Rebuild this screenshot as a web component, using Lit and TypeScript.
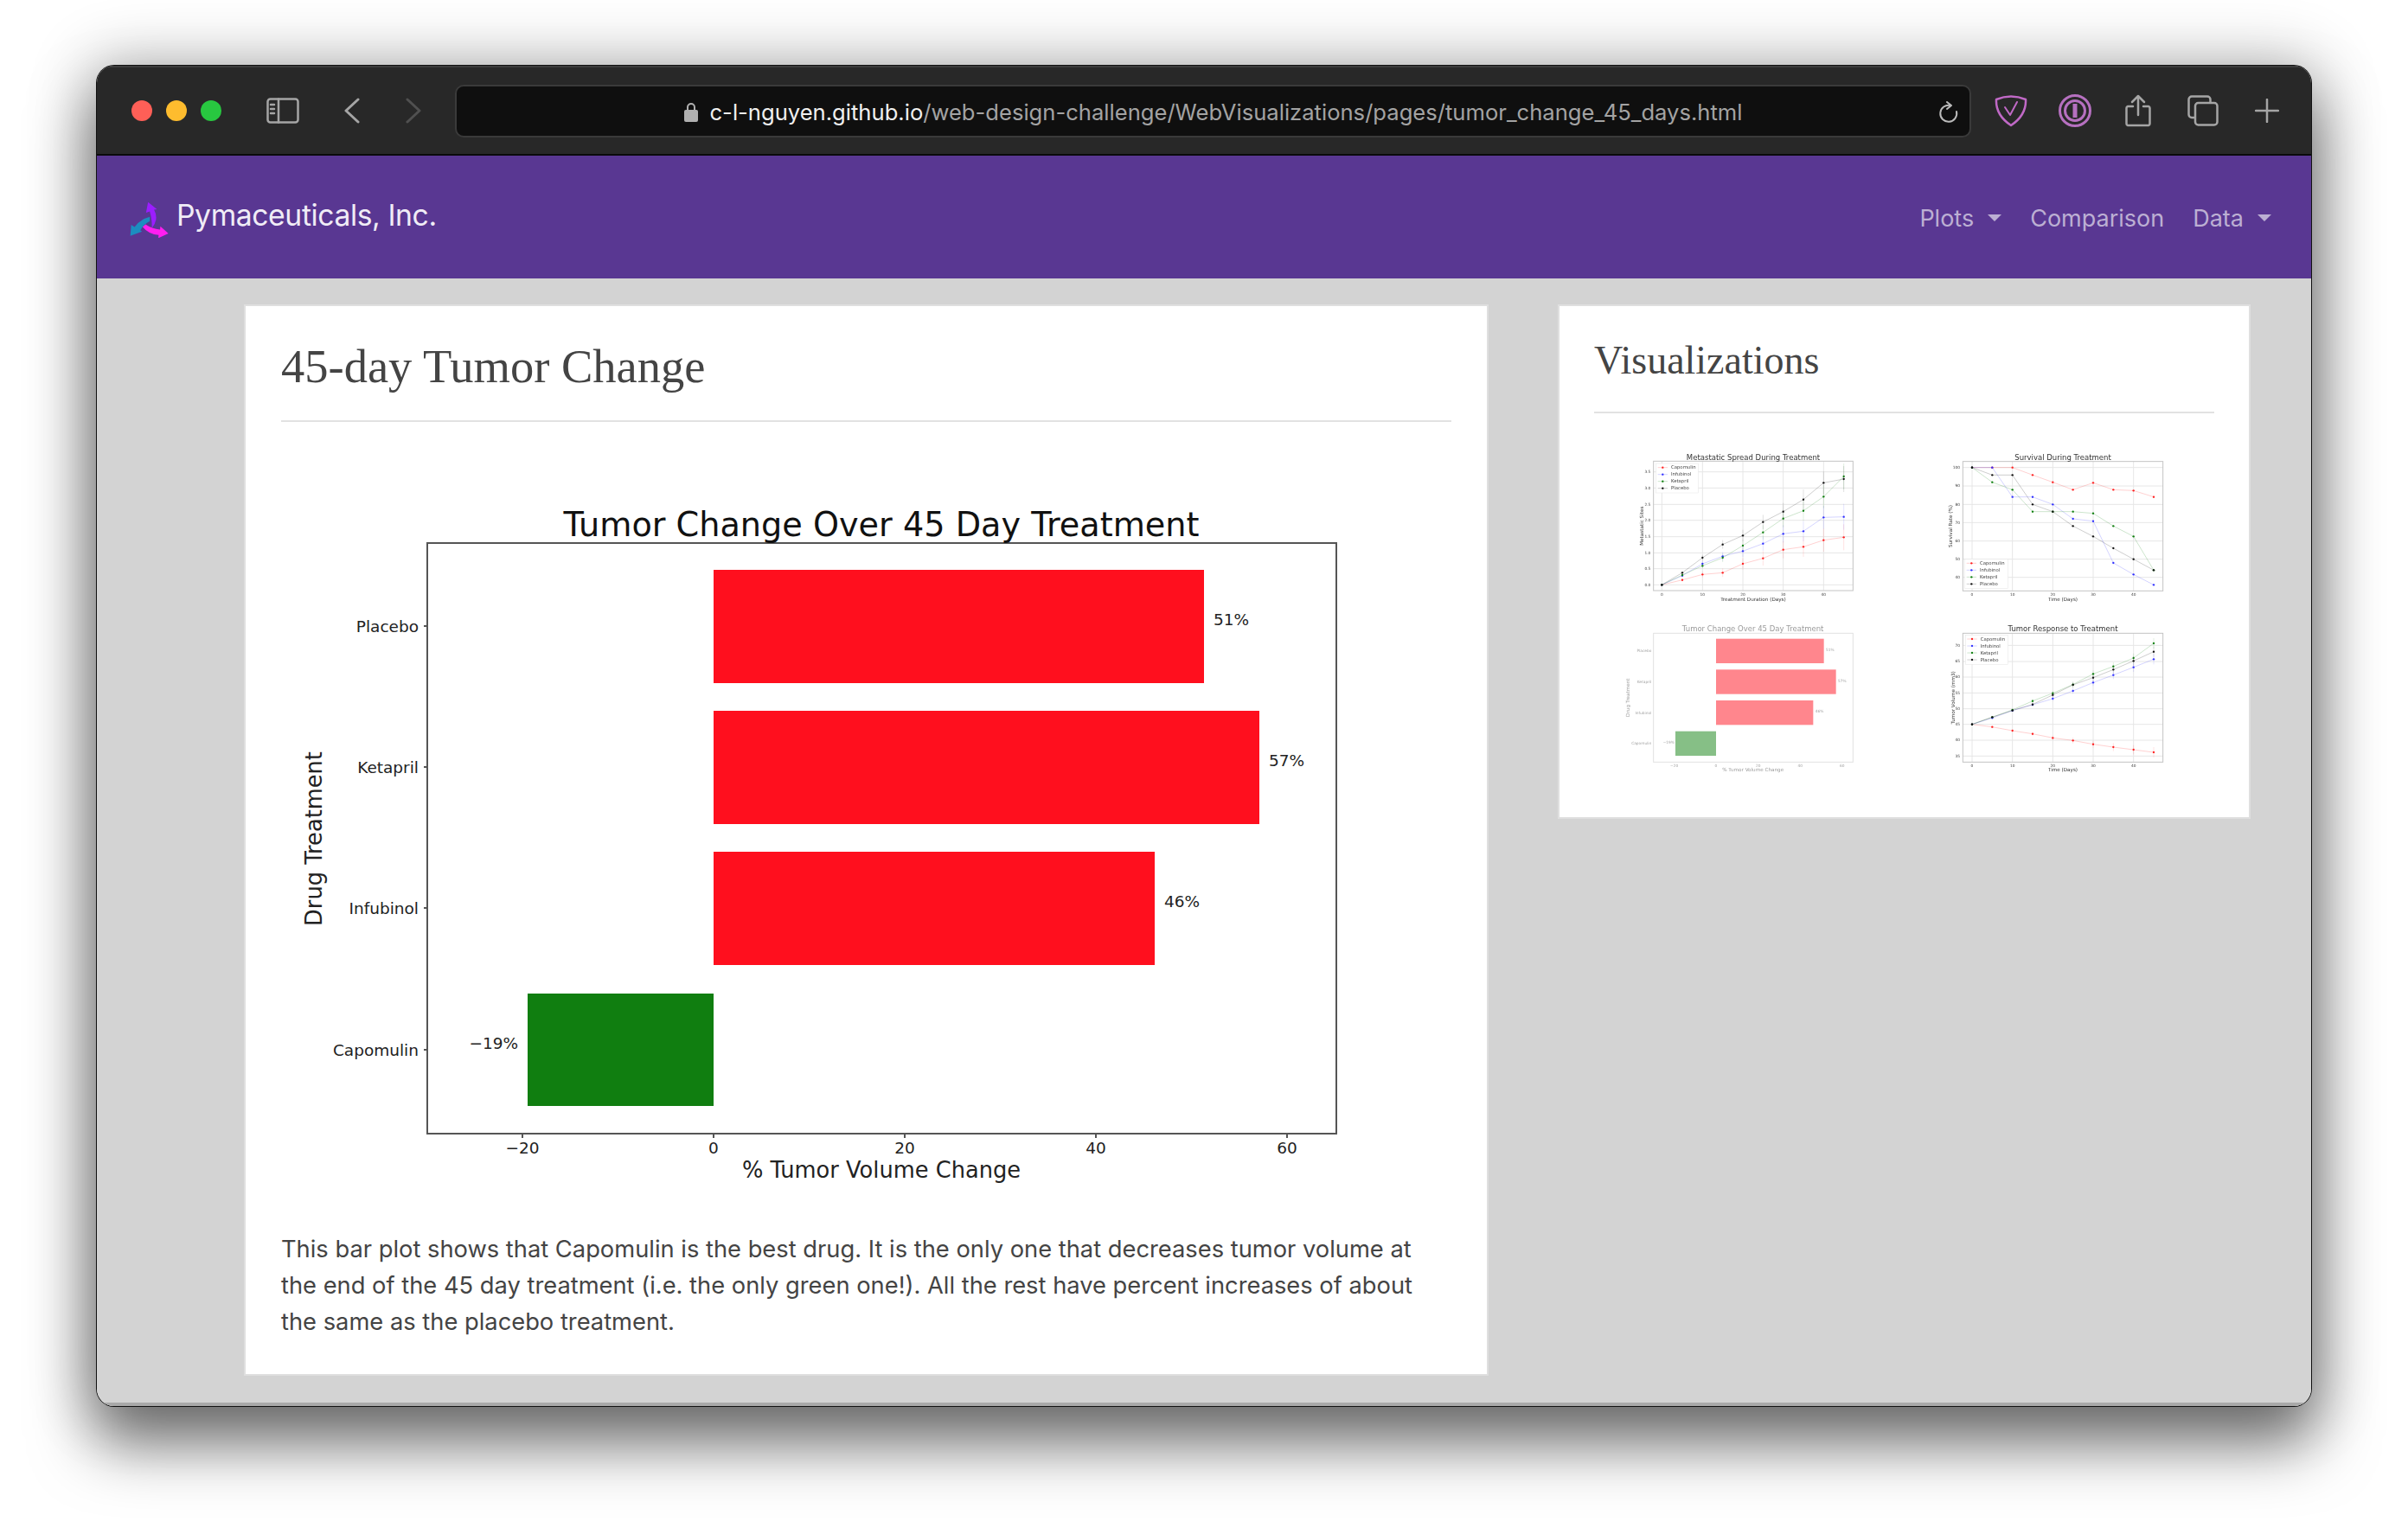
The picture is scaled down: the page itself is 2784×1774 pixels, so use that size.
import {LitElement, css, html, svg} from 'lit';
import {customElement} from 'lit/decorators.js';

const SERIES_COLORS = ['#ff2020', '#3030ff', '#108010', '#111111'];
const SERIES_NAMES = ['Capomulin', 'Infubinol', 'Ketapril', 'Placebo'];

interface LineChart {
    title: string;
    xLabel: string;
    yLabel: string;
    yLabelX: number;
    box: number[];
    xs: number[];
    series: number[][];
    errors: number;
    gridX: number[];
    yTicks: [number, string][];
    legend: number[];
    titleY: number;
    xLabelY: number;
}

const charts: LineChart[] = [
    {
        title: 'Metastatic Spread During Treatment',
        xLabel: 'Treatment Duration (Days)',
        yLabel: 'Metastatic Sites',
        yLabelX: 240,
        box: [275, 100, 967, 549],
        xs: [304, 375, 445, 515, 585, 655, 725, 795, 865, 935],
        series: [
            [529, 512, 493, 487, 456, 437, 407, 397, 374, 364],
            [529, 497, 456, 430, 412, 386, 352, 343, 295, 293],
            [529, 495, 463, 435, 393, 347, 299, 272, 223, 153],
            [529, 487, 435, 389, 358, 311, 275, 233, 175, 162],
        ],
        errors: 5,
        gridX: [304, 445, 585, 725, 865],
        yTicks: [[529, '0.0'], [473, '0.5'], [418, '1.0'], [362, '1.5'], [305, '2.0'], [250, '2.5'], [193, '3.0'], [137, '3.5']],
        legend: [284, 108, 430, 210],
        titleY: 95,
        xLabelY: 584,
    },
    {
        title: 'Survival During Treatment',
        xLabel: 'Time (Days)',
        yLabel: 'Survival Rate (%)',
        yLabelX: 172,
        box: [208, 101, 902, 550],
        xs: [240, 310, 380, 450, 520, 590, 660, 730, 800, 870],
        series: [
            [122, 122, 122, 148, 173, 199, 175, 199, 202, 224],
            [122, 122, 224, 224, 250, 300, 308, 453, 493, 529],
            [122, 173, 199, 275, 275, 275, 281, 325, 361, 478],
            [122, 148, 148, 250, 275, 325, 361, 402, 440, 478],
        ],
        errors: 0,
        gridX: [240, 380, 520, 660, 800],
        yTicks: [[122, '100'], [186, '90'], [250, '80'], [313, '70'], [377, '60'], [440, '50'], [503, '40']],
        legend: [215, 440, 365, 542],
        titleY: 95,
        xLabelY: 584,
    },
    {
        title: 'Tumor Response to Treatment',
        xLabel: 'Time (Days)',
        yLabel: 'Tumor Volume (mm3)',
        yLabelX: 180,
        box: [208, 97, 902, 544],
        xs: [240, 310, 380, 450, 520, 590, 660, 730, 800, 870],
        series: [
            [413, 422, 435, 446, 460, 469, 482, 492, 501, 510],
            [413, 391, 365, 345, 324, 297, 268, 242, 215, 187],
            [413, 388, 363, 332, 305, 275, 238, 212, 183, 132],
            [413, 388, 365, 344, 311, 276, 251, 223, 193, 161],
        ],
        errors: 2,
        gridX: [240, 380, 520, 660, 800],
        yTicks: [[139, '70'], [195, '65'], [249, '60'], [304, '55'], [359, '50'], [413, '45'], [468, '40'], [523, '35']],
        legend: [217, 103, 365, 205],
        titleY: 90,
        xLabelY: 577,
    },
];

function lineThumb(c: LineChart) {
    const [x0, y0, x1, y1] = c.box;
    const [lx0, ly0, lx1, ly1] = c.legend;
    const midX = (x0 + x1) / 2;
    const midY = (y0 + y1) / 2;
    return html`<svg class="thumb" viewBox="120 30 960 600">
        ${c.gridX.map((x) => svg`<line class="grid" x1=${x} x2=${x} y1=${y0} y2=${y1}></line>
            <text class="tick" x=${x} y=${y1 + 18} text-anchor="middle">${x === c.gridX[0] ? 0 : 10 * c.gridX.indexOf(x)}</text>`)}
        ${c.yTicks.map(([y, label]) => svg`<line class="grid" x1=${x0} x2=${x1} y1=${y} y2=${y}></line>
            <text class="tick" x=${x0 - 10} y=${y + 4} text-anchor="end">${label}</text>`)}
        ${c.series.map((ys, s) => svg`
            ${c.errors ? ys.map((y, i) => svg`<line x1=${c.xs[i]} x2=${c.xs[i]} y1=${y - i * c.errors} y2=${y + i * c.errors} stroke=${SERIES_COLORS[s]} stroke-opacity="0.2" stroke-width="2"></line>`) : ''}
            <polyline points=${ys.map((y, i) => `${c.xs[i]},${y}`).join(' ')} fill="none" stroke=${SERIES_COLORS[s]} stroke-opacity="0.25" stroke-width="2.5"></polyline>
            ${ys.map((y, i) => svg`<circle cx=${c.xs[i]} cy=${y} r="3.5" fill=${SERIES_COLORS[s]}></circle>`)}
        `)}
        <rect class="frame" x=${x0} y=${y0} width=${x1 - x0} height=${y1 - y0}></rect>
        <rect x=${lx0} y=${ly0} width=${lx1 - lx0} height=${ly1 - ly0} fill="#fff" stroke="#e4e4e4" stroke-width="1.5"></rect>
        ${SERIES_NAMES.map((name, s) => {
            const y = ly0 + 14 + s * 24;
            return svg`<line x1=${lx0 + 6} x2=${lx0 + 40} y1=${y} y2=${y} stroke=${SERIES_COLORS[s]} stroke-opacity="0.25" stroke-width="2.5"></line>
                <circle cx=${lx0 + 23} cy=${y} r="3.5" fill=${SERIES_COLORS[s]}></circle>
                <text class="legend" x=${lx0 + 52} y=${y + 5}>${name}</text>`;
        })}
        <text class="title" x=${midX} y=${c.titleY} text-anchor="middle">${c.title}</text>
        <text class="axis" x=${midX} y=${c.xLabelY} text-anchor="middle">${c.xLabel}</text>
        <text class="axis" transform="translate(${c.yLabelX} ${midY}) rotate(-90)" text-anchor="middle">${c.yLabel}</text>
    </svg>`;
}

function barThumb() {
    const bars = [
        [492, 116, 374, 85, '#ff0f1e'],
        [492, 223, 416, 85, '#ff0f1e'],
        [492, 330, 337, 85, '#ff0f1e'],
        [351, 437, 141, 85, '#108010'],
    ] as [number, number, number, number, string][];
    const names: [string, number][] = [['Placebo', 159], ['Ketapril', 266], ['Infubinol', 373], ['Capomulin', 480]];
    const ticks: [string, number][] = [['−20', 347], ['0', 492], ['20', 638], ['40', 784], ['60', 929]];
    const values: [string, number, number][] = [['51%', 873, 159], ['57%', 915, 266], ['46%', 836, 373], ['−19%', 308, 480]];
    return html`<svg class="thumb faded" viewBox="120 30 960 600">
        ${bars.map(([x, y, w, h, fill]) => svg`<rect x=${x} y=${y} width=${w} height=${h} fill=${fill}></rect>`)}
        <rect class="frame" x="275" y="97" width="692" height="447"></rect>
        ${names.map(([n, y]) => svg`<text class="tick" x="268" y=${y + 4} text-anchor="end">${n}</text>`)}
        ${ticks.map(([t, x]) => svg`<text class="tick" x=${x} y="560" text-anchor="middle">${t}</text>`)}
        ${values.map(([t, x, y]) => svg`<text class="tick" x=${x} y=${y}>${t}</text>`)}
        <text class="title" x="620" y="90" text-anchor="middle">Tumor Change Over 45 Day Treatment</text>
        <text class="axis" x="620" y="577" text-anchor="middle">% Tumor Volume Change</text>
        <text class="axis" transform="translate(193 320) rotate(-90)" text-anchor="middle">Drug Treatment</text>
    </svg>`;
}

function mainChart() {
    const bars: [string, number, number, string, string, number][] = [
        ['Placebo', 659, 1392, '#ff0f1e', '51%', 1403],
        ['Ketapril', 822, 1456, '#ff0f1e', '57%', 1467],
        ['Infubinol', 985, 1335, '#ff0f1e', '46%', 1346],
    ];
    const ticks: [string, number][] = [['−20', 604], ['0', 825], ['20', 1046], ['40', 1267], ['60', 1488]];
    return html`<svg class="plot" viewBox="325 560 1354 840">
        <rect class="plot-frame" x="494" y="628" width="1051" height="683"></rect>
        ${bars.map(([name, y, right, fill, label, lx]) => svg`
            <rect x="825" y=${y} width=${right - 825} height="131" fill=${fill}></rect>
            <line class="plot-frame" x1="490" x2="494" y1=${y + 65} y2=${y + 65}></line>
            <text class="plot-tick" x="484" y=${y + 72} text-anchor="end">${name}</text>
            <text class="plot-tick" x=${lx} y=${y + 64}>${label}</text>`)}
        <rect x="610" y="1149" width="215" height="130" fill="#107e10"></rect>
        <line class="plot-frame" x1="490" x2="494" y1="1214" y2="1214"></line>
        <text class="plot-tick" x="484" y="1221" text-anchor="end">Capomulin</text>
        <text class="plot-tick" x="599" y="1213" text-anchor="end">−19%</text>
        ${ticks.map(([t, x]) => svg`<line class="plot-frame" x1=${x} x2=${x} y1="1311" y2="1316"></line>
            <text class="plot-tick" x=${x} y="1334" text-anchor="middle">${t}</text>`)}
        <text class="plot-title" x="1019" y="620" text-anchor="middle">Tumor Change Over 45 Day Treatment</text>
        <text class="plot-axis" x="1019" y="1362" text-anchor="middle">% Tumor Volume Change</text>
        <text class="plot-axis" transform="translate(372 970) rotate(-90)" text-anchor="middle">Drug Treatment</text>
    </svg>`;
}

@customElement('app-root')
export class AppRoot extends LitElement {
    static styles = css`
        :host {
            display: block;
            height: 1774px;
            padding: 76px 112px 0 112px;
            box-sizing: border-box;
            background: #fff;
            overflow: hidden;
            font-family: Inter, "Liberation Sans", sans-serif;
        }

        .window {
            height: 1550px;
            display: flex;
            flex-direction: column;
            border-radius: 20px;
            overflow: hidden;
        }

        .shadow {
            border-radius: 20px;
            box-shadow: 0 0 0 1px #111, 0 42px 70px 4px rgba(0, 0, 0, 0.5), 0 0 70px 10px rgba(0, 0, 0, 0.24);
        }

        .toolbar {
            height: 104px;
            flex: none;
            box-sizing: border-box;
            display: flex;
            align-items: center;
            background: #282828;
            border-top: 2px solid #3c3c3c;
            border-bottom: 2px solid #0a0a0a;
            padding: 0 0 0 40px;
        }

        .light {
            flex: none;
            width: 24px;
            height: 24px;
            border-radius: 50%;
            margin-right: 16px;
        }

        .toolbar svg {
            flex: none;
            fill: none;
            stroke: #a5a5a5;
            stroke-width: 2.5;
            stroke-linecap: round;
            stroke-linejoin: round;
        }

        .sidebar-icon {
            margin-left: 36px;
        }

        .back {
            margin-left: 52px;
        }

        .forward {
            margin-left: 53px;
            stroke: #505050 !important;
        }

        .address {
            margin-left: 39px;
            width: 1753px;
            height: 61px;
            box-sizing: border-box;
            flex: none;
            display: flex;
            align-items: center;
            position: relative;
            justify-content: center;
            background: #0f0f0f;
            border: 2px solid #3a3a3a;
            border-radius: 10px;
            font-size: 25.6px;
            color: #a3a3a3;
            padding-top: 2px;
        }

        .lock {
            margin-right: 12px;
            stroke: none !important;
            fill: #b0b0b0 !important;
        }

        .host-name {
            color: #f0f0f0;
        }

        .reload {
            position: absolute;
            right: 12px;
            top: 17px;
        }

        .shield {
            margin-left: 27px;
            stroke: #c069c6 !important;
        }

        .onepass {
            margin-left: 36px;
            stroke: #b670c0 !important;
        }

        .share {
            margin-left: 39px;
        }

        .tabs {
            margin-left: 42px;
        }

        .plus {
            margin-left: 42px;
        }

        .navbar {
            height: 142px;
            flex: none;
            box-sizing: border-box;
            display: flex;
            align-items: center;
            justify-content: space-between;
            background: #593792;
            padding: 0 46px 0 37px;
        }

        .brand {
            display: flex;
            align-items: center;
            color: #f0ecf6;
            font-size: 33.700px;
            letter-spacing: -0.4px;
            gap: 7px;
            padding-bottom: 6px;
        }

        .brand svg {
            margin-top: 10px;
        }

        .nav-links {
            display: flex;
            align-items: center;
            font-size: 27px;
            color: #bcafd3;
            padding-top: 2px;
        }

        .nav-link {
            display: flex;
            align-items: center;
            margin-left: 33px;
        }

        .caret {
            width: 0;
            height: 0;
            margin-left: 16px;
            border-left: 8px solid transparent;
            border-right: 8px solid transparent;
            border-top: 8px solid #bcafd3;
        }

        .content {
            flex: 1;
            display: flex;
            align-items: flex-start;
            gap: 80px;
            background: #d3d3d3;
            padding: 30px 0 0 170px;
            border-bottom: 4px solid #a9a9a9;
        }

        .card {
            box-sizing: border-box;
            background: #fff;
            border: 2px solid #dfdfdf;
            color: #444;
        }

        .card-main {
            width: 1439px;
            height: 1239px;
            padding: 0 41px;
        }

        .card-side {
            width: 801px;
            height: 595px;
            padding: 0 40px;
        }

        h2 {
            margin: 0;
            font-family: Georgia, "Liberation Serif", serif;
            font-weight: 400;
        }

        .card-main h2 {
            font-size: 54.500px;
            line-height: 80px;
            padding-top: 30px;
            padding-bottom: 22px;
        }

        .card-side h2 {
            font-size: 46px;
            line-height: 70px;
            padding-top: 28px;
            padding-bottom: 24px;
        }

        .rule {
            height: 2px;
            background: #e2e2e2;
        }

        .plot {
            display: block;
            width: 1354px;
            height: 840px;
            margin-top: 72px;
            margin-bottom: 24px;
        }

        .plot-frame {
            fill: none;
            stroke: #555;
            stroke-width: 2;
        }

        .plot-title {
            font: 38.200px "DejaVu Sans", sans-serif;
            fill: #111;
        }

        .plot-axis {
            font: 25.700px "DejaVu Sans", sans-serif;
            fill: #222;
        }

        .plot-tick {
            font: 18.500px "DejaVu Sans", sans-serif;
            fill: #222;
        }

        p {
            margin: 0;
            max-width: 1340px;
            font-size: 27.300px;
            line-height: 42px;
        }

        .thumbs {
            display: grid;
            grid-template-columns: 320px 320px;
            grid-auto-rows: 200px;
            column-gap: 60px;
            padding: 32px 0 0 17px;
        }

        .thumb {
            display: block;
            width: 320px;
            height: 200px;
            filter: blur(0.6px);
        }

        .faded {
            opacity: 0.5;
        }

        .grid {
            stroke: #e6e6e6;
            stroke-width: 3;
        }

        .frame {
            fill: none;
            stroke: #c4c4c4;
            stroke-width: 3;
        }

        .tick {
            font: 13px "DejaVu Sans", sans-serif;
            fill: #444;
        }

        .legend {
            font: 16px "DejaVu Sans", sans-serif;
            fill: #444;
        }

        .axis {
            font: 17px "DejaVu Sans", sans-serif;
            fill: #333;
        }

        .title {
            font: 25.500px "DejaVu Sans", sans-serif;
            fill: #333;
        }
    `;

    render() {
        return html`
            <div class="shadow">
                <div class="window">
                    ${this.renderToolbar()}
                    <nav class="navbar">
                        <div class="brand">
                            <svg width="48" height="43" viewBox="60 60 145 130">
                                <path fill="#9b1eff" d="M127 65L158 90L148 92Q166 125 140 157Q142 128 133 98L120 102Z"/>
                                <path fill="#1c8dc0" d="M65 183L68 145L80 152Q100 125 133 117L133 132Q112 142 100 164L106 168Z"/>
                                <path fill="#ff1ef0" d="M198 175L163 191L164 180Q130 178 108 152L118 143Q140 158 169 161L170 150Z"/>
                            </svg>
                            Pymaceuticals, Inc.
                        </div>
                        <div class="nav-links">
                            <span class="nav-link">Plots<span class="caret"></span></span>
                            <span class="nav-link">Comparison</span>
                            <span class="nav-link">Data<span class="caret"></span></span>
                        </div>
                    </nav>
                    <main class="content">
                        <section class="card card-main">
                            <h2>45-day Tumor Change</h2>
                            <div class="rule"></div>
                            ${mainChart()}
                            <p>This bar plot shows that Capomulin is the best drug. It is the only one that decreases tumor volume at the end of the 45 day treatment (i.e. the only green one!). All the rest have percent increases of about the same as the placebo treatment.</p>
                        </section>
                        <aside class="card card-side">
                            <h2>Visualizations</h2>
                            <div class="rule"></div>
                            <div class="thumbs">
                                ${lineThumb(charts[0])}
                                ${lineThumb(charts[1])}
                                ${barThumb()}
                                ${lineThumb(charts[2])}
                            </div>
                        </aside>
                    </main>
                </div>
            </div>
        `;
    }

    renderToolbar() {
        return html`
            <header class="toolbar">
                <span class="light" style="background:#ff5f57"></span>
                <span class="light" style="background:#febc2e"></span>
                <span class="light" style="background:#28c840"></span>
                <svg class="sidebar-icon" width="38" height="30" viewBox="0 0 38 30">
                    <rect x="1.5" y="1.5" width="35" height="27" rx="3"/>
                    <path d="M14 1.5V28.5M5 8H9M5 13H9M5 18H9"/>
                </svg>
                <svg class="back" width="18" height="30" viewBox="0 0 18 30"><path d="M16 2L2 15L16 28" stroke-width="3"/></svg>
                <svg class="forward" width="18" height="30" viewBox="0 0 18 30"><path d="M2 2L16 15L2 28" stroke-width="3"/></svg>
                <div class="address">
                    <svg class="lock" width="18" height="24" viewBox="0 0 18 24">
                        <rect x="1" y="10" width="16" height="14" rx="2"/>
                        <path d="M4 11V7A5 5 0 0 1 14 7V11H12V7A3 3 0 0 0 6 7V11Z"/>
                    </svg>
                    <span><span class="host-name">c-l-nguyen.github.io</span>/web-design-challenge/WebVisualizations/pages/tumor_change_45_days.html</span>
                    <svg class="reload" width="24" height="28" viewBox="0 0 24 28">
                        <path d="M14 5A9.5 9.5 0 1 0 21 12" stroke="#bbb" stroke-width="2"/>
                        <path d="M10 1L15 5L10 9" stroke="#bbb" stroke-width="2"/>
                    </svg>
                </div>
                <svg class="shield" width="38" height="38" viewBox="0 0 38 38">
                    <path d="M2 6Q19 -1 36 6Q37 24 19 36Q1 24 2 6Z"/>
                    <path d="M12 15L18 24L26 9" stroke-width="2"/>
                </svg>
                <svg class="onepass" width="38" height="38" viewBox="0 0 38 38">
                    <circle cx="19" cy="19" r="17.5" stroke-width="3"/>
                    <circle cx="19" cy="19" r="11.5" stroke-width="3"/>
                    <path d="M19 11V27" stroke-width="5" stroke-linecap="butt"/>
                </svg>
                <svg class="share" width="30" height="38" viewBox="0 0 30 38">
                    <path d="M9 14H3A2 2 0 0 0 1.5 16V34A2 2 0 0 0 3 36H27A2 2 0 0 0 28.5 34V16A2 2 0 0 0 27 14H21"/>
                    <path d="M15 24V2M8 9L15 2L22 9"/>
                </svg>
                <svg class="tabs" width="36" height="36" viewBox="0 0 36 36">
                    <path d="M8 26H5A3.500 3.500 0 0 1 1.500 22.500V5A3.500 3.500 0 0 1 5 1.500H23A3.500 3.500 0 0 1 26.500 5V8"/>
                    <rect x="9" y="9" width="25.500" height="25.500" rx="3.500"/>
                </svg>
                <svg class="plus" width="28" height="28" viewBox="0 0 28 28"><path d="M14 1V27M1 14H27"/></svg>
            </header>
        `;
    }
}
